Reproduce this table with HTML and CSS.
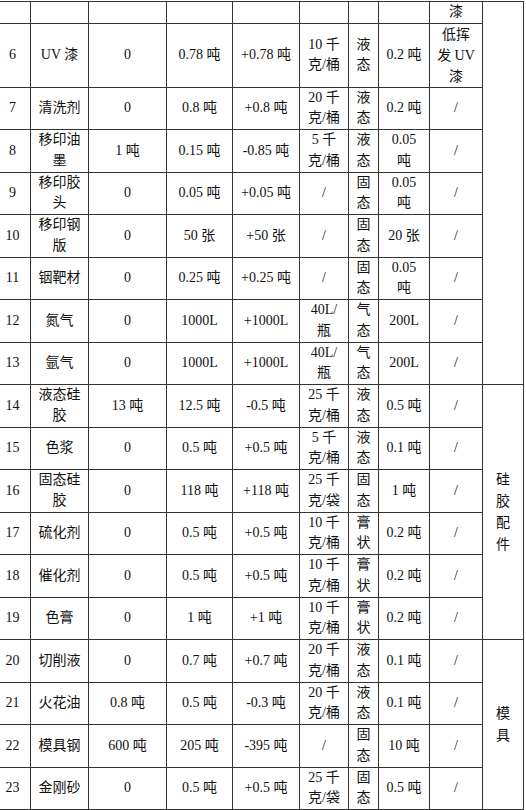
FILE: index.html
```html
<!DOCTYPE html>
<html lang="zh-CN">
<head>
<meta charset="utf-8">
<title>原辅材料表</title>
<link rel="stylesheet" href="styles.css">
</head>
<body>
<table class="t">
<colgroup>
<col class="c1"><col class="c2"><col class="c3"><col class="c4"><col class="c5"><col class="c6"><col class="c7"><col class="c8"><col class="c9"><col class="c10">
</colgroup>
<tbody>
<tr class="r0"><td></td><td></td><td></td><td></td><td></td><td></td><td></td><td></td><td>漆</td><td rowspan="9"></td></tr>
<tr class="r3"><td>6</td><td>UV 漆</td><td>0</td><td>0.78 吨</td><td>+0.78 吨</td><td>10 千<br>克/桶</td><td>液<br>态</td><td>0.2 吨</td><td class="note">低挥<br>发 UV<br>漆</td></tr>
<tr class="r"><td>7</td><td>清洗剂</td><td>0</td><td>0.8 吨</td><td>+0.8 吨</td><td>20 千<br>克/桶</td><td>液<br>态</td><td>0.2 吨</td><td>/</td></tr>
<tr class="r"><td>8</td><td>移印油<br>墨</td><td>1 吨</td><td>0.15 吨</td><td>-0.85 吨</td><td>5 千<br>克/桶</td><td>液<br>态</td><td>0.05<br>吨</td><td>/</td></tr>
<tr class="r"><td>9</td><td>移印胶<br>头</td><td>0</td><td>0.05 吨</td><td>+0.05 吨</td><td>/</td><td>固<br>态</td><td>0.05<br>吨</td><td>/</td></tr>
<tr class="r"><td>10</td><td>移印钢<br>版</td><td>0</td><td>50 张</td><td>+50 张</td><td>/</td><td>固<br>态</td><td>20 张</td><td>/</td></tr>
<tr class="r"><td>11</td><td>铟靶材</td><td>0</td><td>0.25 吨</td><td>+0.25 吨</td><td>/</td><td>固<br>态</td><td>0.05<br>吨</td><td>/</td></tr>
<tr class="r"><td>12</td><td>氮气</td><td>0</td><td>1000L</td><td>+1000L</td><td>40L/<br>瓶</td><td>气<br>态</td><td>200L</td><td>/</td></tr>
<tr class="r"><td>13</td><td>氩气</td><td>0</td><td>1000L</td><td>+1000L</td><td>40L/<br>瓶</td><td>气<br>态</td><td>200L</td><td>/</td></tr>
<tr class="r"><td>14</td><td>液态硅<br>胶</td><td>13 吨</td><td>12.5 吨</td><td>-0.5 吨</td><td>25 千<br>克/桶</td><td>液<br>态</td><td>0.5 吨</td><td>/</td><td rowspan="6" class="grp">硅<br>胶<br>配<br>件</td></tr>
<tr class="r"><td>15</td><td>色浆</td><td>0</td><td>0.5 吨</td><td>+0.5 吨</td><td>5 千<br>克/桶</td><td>液<br>态</td><td>0.1 吨</td><td>/</td></tr>
<tr class="r"><td>16</td><td>固态硅<br>胶</td><td>0</td><td>118 吨</td><td>+118 吨</td><td>25 千<br>克/袋</td><td>固<br>态</td><td>1 吨</td><td>/</td></tr>
<tr class="r"><td>17</td><td>硫化剂</td><td>0</td><td>0.5 吨</td><td>+0.5 吨</td><td>10 千<br>克/桶</td><td>膏<br>状</td><td>0.2 吨</td><td>/</td></tr>
<tr class="r"><td>18</td><td>催化剂</td><td>0</td><td>0.5 吨</td><td>+0.5 吨</td><td>10 千<br>克/桶</td><td>膏<br>状</td><td>0.2 吨</td><td>/</td></tr>
<tr class="r"><td>19</td><td>色膏</td><td>0</td><td>1 吨</td><td>+1 吨</td><td>10 千<br>克/桶</td><td>膏<br>状</td><td>0.2 吨</td><td>/</td></tr>
<tr class="r"><td>20</td><td>切削液</td><td>0</td><td>0.7 吨</td><td>+0.7 吨</td><td>20 千<br>克/桶</td><td>液<br>态</td><td>0.1 吨</td><td>/</td><td rowspan="4" class="grp">模<br>具</td></tr>
<tr class="r"><td>21</td><td>火花油</td><td>0.8 吨</td><td>0.5 吨</td><td>-0.3 吨</td><td>20 千<br>克/桶</td><td>液<br>态</td><td>0.1 吨</td><td>/</td></tr>
<tr class="r"><td>22</td><td>模具钢</td><td>600 吨</td><td>205 吨</td><td>-395 吨</td><td>/</td><td>固<br>态</td><td>10 吨</td><td>/</td></tr>
<tr class="r"><td>23</td><td>金刚砂</td><td>0</td><td>0.5 吨</td><td>+0.5 吨</td><td>25 千<br>克/袋</td><td>固<br>态</td><td>0.5 吨</td><td>/</td></tr>
</tbody>
</table>
</body>
</html>
```

FILE: styles.css
```css
html, body {
  margin: 0;
  padding: 0;
  background: #ffffff;
}
body {
  overflow: hidden;
}
.t {
  border-collapse: collapse;
  table-layout: fixed;
  width: 529px;
  margin-left: -6px;
  margin-top: 1px;
  font-family: "Liberation Serif", "Noto Sans CJK SC", serif;
  font-size: 14px;
  line-height: 20.5px;
  color: #111111;
}
.t td {
  border: 1px solid #333333;
  padding: 0;
  text-align: center;
  vertical-align: middle;
  white-space: nowrap;
}
.c1 { width: 36px; }
.c2 { width: 58px; }
.c3 { width: 78px; }
.c4 { width: 66px; }
.c5 { width: 67px; }
.c6 { width: 49px; }
.c7 { width: 30px; }
.c8 { width: 51px; }
.c9 { width: 53px; }
.c10 { width: 41px; }
.r0 { height: 21px; }
.r3 { height: 64px; }
.r { height: 42.5px; }
.note {
  line-height: 21px;
}
.grp {
  line-height: 21.5px;
}
```
